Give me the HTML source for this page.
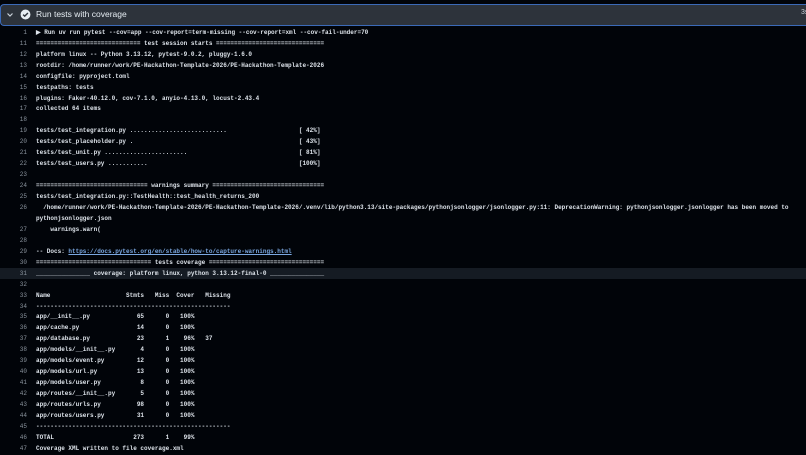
<!DOCTYPE html>
<html><head><meta charset="utf-8"><style>
html,body{margin:0;padding:0;background:#010409;width:806px;height:455px;overflow:hidden}
.hdr{position:absolute;left:0;top:5px;width:806px;height:19px;background:#2d333b;border-top:1.5px solid #3b6ab8;border-bottom:1.5px solid #3b6ab8;border-left:1.5px solid #3b6ab8;border-radius:4px 0 0 4px;box-sizing:border-box;height:22px;top:4px}
.hdr .t{position:absolute;left:35px;top:4px;font:8.5px "Liberation Sans",sans-serif;color:#e6edf3}
.r{position:absolute;left:0;width:806px;height:11px;font:bold 6px/11px "Liberation Mono",monospace;color:#dde3ea;white-space:pre}
.n{position:absolute;left:0;width:27px;text-align:right;color:#8b949e;font-weight:normal}
.c{position:absolute;left:36px}
.hl{background:#151b23}
a{color:#7aa7e0;text-decoration:underline}
</style></head><body>
<div class="hdr">
<svg style="position:absolute;left:5px;top:6px" width="8" height="8" viewBox="0 0 8 8"><path d="M1.5 2.5 L4 5 L6.5 2.5" stroke="#c9d1d9" stroke-width="1.2" fill="none"/></svg>
<svg style="position:absolute;left:19px;top:4px" width="11" height="11" viewBox="0 0 10 10"><circle cx="5" cy="5" r="4.5" fill="#e6edf3"/><path d="M2.8 5.1 L4.3 6.5 L7.2 3.6" stroke="#2d333b" stroke-width="1.3" fill="none"/></svg>
<div class="t">Run tests with coverage</div>
<div style="position:absolute;left:800px;top:4px;font:7px 'Liberation Sans',sans-serif;color:#c9d1d9">3s</div>
</div>
<div class="r" style="top:27px"><span class="n">1</span><span class="c">▶ Run uv run pytest --cov=app --cov-report=term-missing --cov-report=xml --cov-fail-under=70</span></div>
<div class="r" style="top:38px"><span class="n">11</span><span class="c">============================= test session starts ==============================</span></div>
<div class="r" style="top:49px"><span class="n">12</span><span class="c">platform linux -- Python 3.13.12, pytest-9.0.2, pluggy-1.6.0</span></div>
<div class="r" style="top:60px"><span class="n">13</span><span class="c">rootdir: /home/runner/work/PE-Hackathon-Template-2026/PE-Hackathon-Template-2026</span></div>
<div class="r" style="top:71px"><span class="n">14</span><span class="c">configfile: pyproject.toml</span></div>
<div class="r" style="top:82px"><span class="n">15</span><span class="c">testpaths: tests</span></div>
<div class="r" style="top:93px"><span class="n">16</span><span class="c">plugins: Faker-40.12.0, cov-7.1.0, anyio-4.13.0, locust-2.43.4</span></div>
<div class="r" style="top:103px"><span class="n">17</span><span class="c">collected 64 items</span></div>
<div class="r" style="top:114px"><span class="n">18</span></div>
<div class="r" style="top:125px"><span class="n">19</span><span class="c">tests/test_integration.py ...........................                    [ 42%]</span></div>
<div class="r" style="top:136px"><span class="n">20</span><span class="c">tests/test_placeholder.py .                                              [ 43%]</span></div>
<div class="r" style="top:147px"><span class="n">21</span><span class="c">tests/test_unit.py .......................                               [ 81%]</span></div>
<div class="r" style="top:158px"><span class="n">22</span><span class="c">tests/test_users.py ...........                                          [100%]</span></div>
<div class="r" style="top:169px"><span class="n">23</span></div>
<div class="r" style="top:180px"><span class="n">24</span><span class="c">=============================== warnings summary ===============================</span></div>
<div class="r" style="top:191px"><span class="n">25</span><span class="c">tests/test_integration.py::TestHealth::test_health_returns_200</span></div>
<div class="r" style="top:202px"><span class="n">26</span><span class="c">  /home/runner/work/PE-Hackathon-Template-2026/PE-Hackathon-Template-2026/.venv/lib/python3.13/site-packages/pythonjsonlogger/jsonlogger.py:11: DeprecationWarning: pythonjsonlogger.jsonlogger has been moved to</span></div>
<div class="r" style="top:213px"><span class="c">pythonjsonlogger.json</span></div>
<div class="r" style="top:224px"><span class="n">27</span><span class="c">    warnings.warn(</span></div>
<div class="r" style="top:235px"><span class="n">28</span></div>
<div class="r" style="top:246px"><span class="n">29</span><span class="c">-- Docs: <a>https://docs.pytest.org/en/stable/how-to/capture-warnings.html</a></span></div>
<div class="r" style="top:257px"><span class="n">30</span><span class="c">================================ tests coverage ================================</span></div>
<div class="r hl" style="top:268px"><span class="n">31</span><span class="c">_______________ coverage: platform linux, python 3.13.12-final-0 _______________</span></div>
<div class="r" style="top:279px"><span class="n">32</span></div>
<div class="r" style="top:290px"><span class="n">33</span><span class="c">Name                     Stmts   Miss  Cover   Missing</span></div>
<div class="r" style="top:301px"><span class="n">34</span><span class="c">------------------------------------------------------</span></div>
<div class="r" style="top:311px"><span class="n">35</span><span class="c">app/__init__.py             65      0   100%</span></div>
<div class="r" style="top:322px"><span class="n">36</span><span class="c">app/cache.py                14      0   100%</span></div>
<div class="r" style="top:333px"><span class="n">37</span><span class="c">app/database.py             23      1    96%   37</span></div>
<div class="r" style="top:344px"><span class="n">38</span><span class="c">app/models/__init__.py       4      0   100%</span></div>
<div class="r" style="top:355px"><span class="n">39</span><span class="c">app/models/event.py         12      0   100%</span></div>
<div class="r" style="top:366px"><span class="n">40</span><span class="c">app/models/url.py           13      0   100%</span></div>
<div class="r" style="top:377px"><span class="n">41</span><span class="c">app/models/user.py           8      0   100%</span></div>
<div class="r" style="top:388px"><span class="n">42</span><span class="c">app/routes/__init__.py       5      0   100%</span></div>
<div class="r" style="top:399px"><span class="n">43</span><span class="c">app/routes/urls.py          98      0   100%</span></div>
<div class="r" style="top:410px"><span class="n">44</span><span class="c">app/routes/users.py         31      0   100%</span></div>
<div class="r" style="top:421px"><span class="n">45</span><span class="c">------------------------------------------------------</span></div>
<div class="r" style="top:432px"><span class="n">46</span><span class="c">TOTAL                      273      1    99%</span></div>
<div class="r" style="top:443px"><span class="n">47</span><span class="c">Coverage XML written to file coverage.xml</span></div>
</body></html>
